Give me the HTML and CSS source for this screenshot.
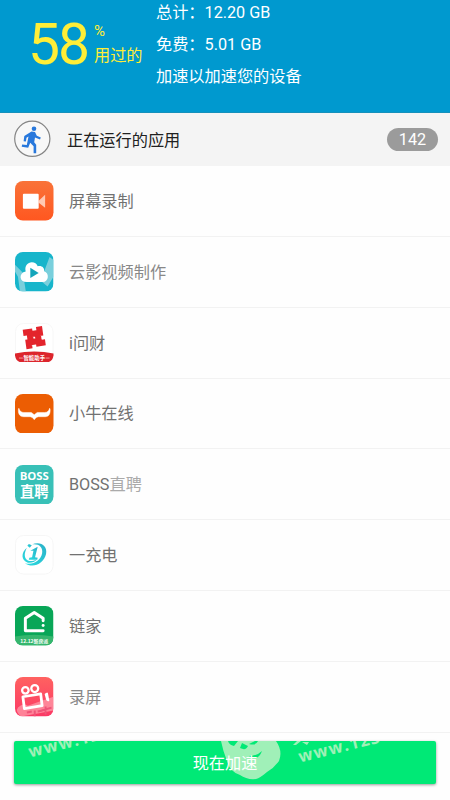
FILE: index.html
```html
<!DOCTYPE html>
<html lang="zh-CN">
<head>
<meta charset="utf-8">
<title>加速</title>
<link rel="stylesheet" href="styles.css">
</head>
<body>
<main class="screen">
  <header class="summary">
    <div class="usage">
      <span class="usage-value">58</span>
      <span class="usage-label"><span class="percent">%</span><span>用过的</span></span>
    </div>
    <div class="details">
      <p>总计：12.20 GB</p>
      <p>免费：5.01 GB</p>
      <p>加速以加速您的设备</p>
    </div>
  </header>
  <section class="running">
    <svg class="runner" viewBox="0 0 38 38">
      <circle cx="19.300" cy="18.800" r="17.600" fill="#f8f8f8" stroke="#858585" stroke-width="1.200"/>
      <circle cx="21" cy="8.700" r="2.300" fill="#2878dc"/>
      <path d="M18.500 11.500l3.500.5 1.800 3.700 4 1.800-.8 2.100-5-2-.8 4.600 2 2.500v8.500h-2.600v-7l-3.400-3.400-2 5-6.500-1 .4-2.300 4.700.5 1.700-8.500-2 1.300-.6 3.700-2.300-.3.700-5.200z" fill="#2878dc"/>
    </svg>
    <h1>正在运行的应用</h1>
    <span class="count">142</span>
  </section>
  <ul class="apps">
    <li>
      <svg class="icon" viewBox="0 0 39 40"><defs><linearGradient id="orange" x2="0" y2="1"><stop stop-color="#f97339"/><stop offset="1" stop-color="#ff5720"/></linearGradient></defs><rect width="39" height="40" rx="8" fill="url(#orange)"/><path d="M24 20l6.500-6v13L24 22z" fill="#ffc9b3"/><rect x="8" y="13" width="16" height="15" rx="1" fill="#fff"/></svg>
      <span class="name">屏幕录制</span>
    </li>
    <li>
      <svg class="icon" viewBox="0 0 39 40"><defs><clipPath id="tile"><rect width="39" height="40" rx="8"/></clipPath></defs><g clip-path="url(#tile)"><path fill="#17b5cb" d="M0 0h39v40H0z"/><path d="M0 13l8 8 3 19H5L3 25l-3-5zM35 5l4 3v17l-6 10-7-6z" fill="#79cfdc"/></g><path d="M12 30.500c-8 0-8.500-9.500-1.200-10.800C9.500 14 13 10.500 17 10.500c3 0 5 1.500 6 4 4-1 7 1.500 6.500 5 5.500 1.500 5 11-1.500 11z" fill="#fff"/><path d="M15.500 16l8.500 5.200-8.500 5.200z" fill="#13a5bb"/></svg>
      <span class="name soft">云影视频制作</span>
    </li>
    <li>
      <svg class="icon" viewBox="0 0 39 40"><rect x=".5" y=".5" width="38" height="39" rx="8" fill="#fff" stroke="#f7f7f7"/><g transform="translate(19.500 14.800) rotate(-8)" fill="none" stroke="#e3242c" stroke-width="6.200"><path d="M-10.500-6.300H-4V4M6.300-10.500V-4H-4M10.500 6.300H4V-4M-6.300 10.500V4H4"/></g><path d="M0 31c12-3 27-3 39 0v2q-1 7-8 7H8q-7 0-8-7z" fill="#dc252c"/><path d="M4 35.500h4M31 35.500h4" stroke="#f59a9b"/><text x="19.500" y="37.400" class="helper">智能助手</text></svg>
      <span class="name">i问财</span>
    </li>
    <li>
      <svg class="icon" viewBox="0 0 39 40"><rect width="39" height="40" rx="8" fill="#ec5d03"/><path d="M4 14.500q.8 4.200 5 4.200h7.500L19.500 21l3-2.300H30q4.200 0 5-4.200.7 0 .6 2c0 4-1.500 6.500-5 6.500h-7q-2.200 0-4.100 3-1.900-3-4.100-3H9c-4 0-5.600-2.500-5.600-6.500q0-2 .6-2z" fill="#fff" stroke="#fff" stroke-width=".5"/></svg>
      <span class="name">小牛在线</span>
    </li>
    <li>
      <svg class="icon" viewBox="0 0 39 40"><rect width="39" height="40" rx="8" fill="#38c0b7"/><text x="19.500" y="15.700" class="boss">BOSS</text><text x="19.500" y="32.500" class="hire">直聘</text></svg>
      <span class="name">BOSS<span class="pale">直聘</span></span>
    </li>
    <li>
      <svg class="icon" viewBox="0 0 39 40"><defs><linearGradient id="aqua" x1="1" x2="0" y2="1"><stop stop-color="#2bb0c8"/><stop offset="1" stop-color="#29dce0"/></linearGradient></defs><rect x=".5" y=".5" width="38" height="39" rx="8" fill="#fff" stroke="#f6f6f6"/><g fill="url(#aqua)"><path d="M17 9.500C26 6 33 11 31.500 19 29.500 29 18 34.500 10 28.500 18 31 26 26 27.500 18.500 28.500 12 24 8.500 17 9.500z"/><path d="M12 13C6 18 6 26 13 28c4 .5 7-1 9-3-5 2-9 2-11-1-2-3-1-7 1-11z"/><path d="M15.500 16l7.500-4-2.700 10.500 2.700.5-.5 2H14l.5-2 2.800-.5 1.400-6.500z"/><path d="M14 9l3 1.500-2 2.500-2.500-2z"/></g></svg>
      <span class="name">一充电</span>
    </li>
    <li>
      <svg class="icon" viewBox="0 0 39 40"><g clip-path="url(#tile)"><path fill="#08a657" d="M0 0h39v40H0z"/><path d="M0 31q19-4 39 0v9H0z" fill="#36b66e"/></g><path d="M28.500 15v-2.500L19.500 6.500l-9 6V25h18" fill="none" stroke="#fff" stroke-width="3" stroke-linejoin="round" stroke-linecap="round"/><circle cx="28.500" cy="19.800" r="1.500" fill="#fff"/><text x="19.500" y="37" class="promo">12.12新房派</text></svg>
      <span class="name">链家</span>
    </li>
    <li>
      <svg class="icon" viewBox="0 0 39 40"><defs><linearGradient id="pink" x2="0" y2="1"><stop stop-color="#ff6260"/><stop offset="1" stop-color="#fb3865"/></linearGradient></defs><g clip-path="url(#tile)"><path fill="url(#pink)" d="M0 0h39v40H0z"/><path d="M3 31q5-5 10-2l14-5 12-4v14L23 37 6 40q-6-5-3-9z" fill="#ff9ba9" opacity=".75"/><path d="M12 36l5-1m3-1v6m3-5l5-1m3-4v8m-4-4l10-3" stroke="#ef5478" stroke-width="2"/></g><g fill="none" stroke="#fff"><circle cx="10.500" cy="13.500" r="3.300" stroke-width="2.300"/><circle cx="20" cy="11.700" r="3.500" stroke-width="2.300"/><path d="M8 20l18-3 1.500 12-18 3z" stroke-width="2.800" stroke-linejoin="round"/><path d="M31 17.500l1.500-.8 1.300 7-1.300-.7z" stroke-width="1.800" stroke-linejoin="round"/></g></svg>
      <span class="name soft">录屏</span>
    </li>
  </ul>
  <footer class="actions">
    <button type="button">
      <svg class="watermark" viewBox="0 0 422 43" aria-hidden="true">
        <g fill="#a0f0b8">
          <text class="url" transform="translate(16 16.500) rotate(-14)">www.12</text>
          <text class="url" transform="translate(286 21.500) rotate(-14)">www.123</text>
          <path d="M283 0h4l-5 4h-3zM288 1l7 0-2 3z"/>
          <path d="M207 0h55q7 10 3 20-5 7-12 11-7 6-11 7-9 1-16-4-10-3-13-14-4-10-6-20z"/>
        </g>
        <path d="M214 0q1 4 6 5l4-5zM228 2l-2 5q6 3 8-2zM241 0l-6 3q7 2 9-3zM248 10q-5 5-13 5 9 6 13-5z" fill="#00e976"/>
      </svg>
      <span>现在加速</span>
    </button>
  </footer>
</main>
</body>
</html>
```

FILE: styles.css
```css
* { box-sizing: border-box; }
body {
  margin: 0;
  background: #fefefe;
  font-family: Roboto, "Noto Sans CJK SC", sans-serif;
  font-size: 16.2px;
}
.screen {
  display: flex;
  flex-direction: column;
  height: 800px;
  overflow: hidden;
}
.summary {
  display: flex;
  height: 113px;
  flex-shrink: 0;
  background: #0099cf;
  border-bottom: 1px solid #1590bb;
}
.usage {
  display: flex;
  width: 156px;
  padding: 15px 0 0 28px;
  color: #ffee37;
}
.usage-value {
  width: 66px;
  font-size: 57px;
  line-height: 59px;
  letter-spacing: -2px;
}
.usage-label {
  display: flex;
  flex-direction: column;
  line-height: 24px;
  padding-top: 4px;
}
.percent { font-size: 15px; height: 25px; line-height: 24px; }
.details { padding-top: 1px; color: #fff; }
.details p { margin: 0; height: 32px; line-height: 24px; white-space: nowrap; }
.running {
  display: flex;
  align-items: center;
  height: 53px;
  flex-shrink: 0;
  padding: 0 12px 1px 13px;
  background: #f4f4f4;
}
.runner { width: 38px; height: 38px; }
.running h1 {
  margin: 0 auto 0 16px;
  color: #202020;
  font-size: 16.2px;
  font-weight: 400;
}
.count {
  width: 51px;
  height: 23px;
  border-radius: 12px;
  background: #9b9b9b;
  color: #fff;
  line-height: 24px;
  text-align: center;
}
.apps { margin: 0; padding: 0; list-style: none; }
.apps li {
  display: flex;
  align-items: center;
  gap: 15.500px;
  height: 70.850px;
  padding-left: 15px;
  border-bottom: 1px solid #f2f2f2;
  color: #717171;
}
.name { padding-bottom: 2px; }
.icon { width: 38.500px; height: 39.500px; flex-shrink: 0; }
.soft { color: #888; }
.pale { color: #aaa; }
.helper, .promo, .boss, .hire {
  fill: #fff;
  text-anchor: middle;
  font-family: "Noto Sans CJK SC", sans-serif;
  font-weight: 700;
}
.helper { font-size: 5.500px; }
.promo { font-size: 5px; }
.boss { font-family: "Open Sans", sans-serif; font-size: 11.500px; }
.hire { font-size: 14.500px; }
.actions { padding: 8px 14px 0; }
.actions button {
  position: relative;
  display: block;
  width: 422px;
  height: 43px;
  padding: 0;
  border: 0;
  border-radius: 2px;
  background: #00e976;
  box-shadow: 0 1px 3px #00000066;
  color: #fff;
  font: inherit;
  overflow: hidden;
}
.watermark { position: absolute; inset: 0; width: 100%; height: 100%; }
.actions button span { position: relative; }
.url { font-family: "Open Sans", sans-serif; font-size: 16.500px; font-weight: 700; letter-spacing: 1.300px; }
```
